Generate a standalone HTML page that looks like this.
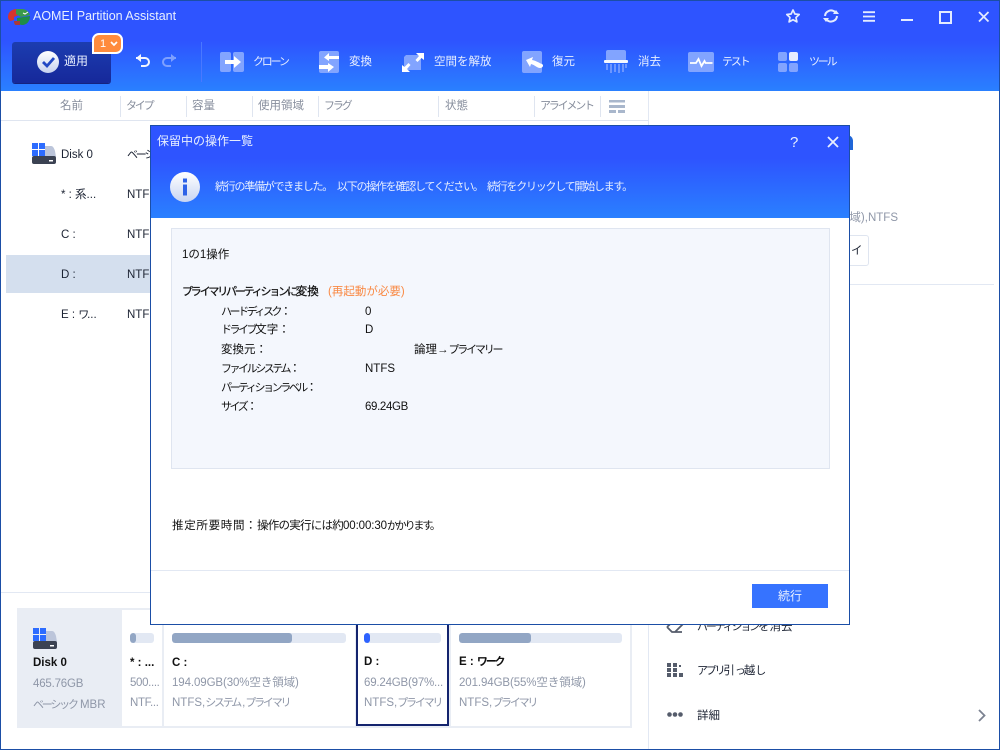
<!DOCTYPE html>
<html lang="ja">
<head>
<meta charset="utf-8">
<title>AOMEI Partition Assistant</title>
<style>
html,body{margin:0;padding:0;background:#fff}
#app{position:relative;width:1000px;height:750px;overflow:hidden;background:#fff;font-family:"Liberation Sans","Noto Sans CJK JP",sans-serif;font-size:11.5px;color:#1c2333}
.t{position:absolute;white-space:nowrap;line-height:16px}
.a{position:absolute}
.w{color:#e8efff}
.g{color:#8f97a8}
.h{color:#868d9c;font-size:11.5px}
.k{font-size:11px;letter-spacing:-2.2px}
.k2{font-size:11px;letter-spacing:-2.45px}
.n{letter-spacing:-.35px}
.sep{position:absolute;top:96px;width:1px;height:21px;background:#dfe5f0}
svg{position:absolute;overflow:visible}
.bar{position:absolute;height:10px;background:#e2e8f3;border-radius:3px;overflow:hidden}
.bar i{position:absolute;left:0;top:0;bottom:0;background:#92a6c4;border-radius:3px}
b{font-weight:700}
</style>
</head>
<body>
<div id="app">
  <!-- Header -->
  <div class="a" style="left:0;top:0;width:1000px;height:91px;background:linear-gradient(#2e54ff 0,#2e54ff 45%,#2a80ff 100%)"></div>
  <svg style="left:8px;top:8px" width="22" height="18" viewBox="0 0 22 18">
    <path d="M0 9C0 4 4 1 9 1l2 0 0 6-5 2 0 3-4 1C1 12 0 11 0 9z" fill="#d8342f"/>
    <path d="M8 1h6c4 0 7 3 8 6l-9 2-5-3z" fill="#3a9a4a"/>
    <path d="M9 10l13-2c0 5-3 9-8 9l-5-1z" fill="#1f8d46"/>
    <path d="M6 13h6v4H8c-1 0-2-1-2-4z" fill="#a93a3a"/>
    <path d="M15 5l2 1 3-2" stroke="#fff" fill="none"/>
  </svg>
  <div class="t w" style="left:33px;top:8px;font-size:12.5px">AOMEI Partition Assistant</div>

  <!-- Window controls -->
  <svg style="left:785px;top:8px" width="16" height="16" viewBox="0 0 16 16"><path d="M8 2l1.900 4 4.300.5-3.200 3 .9 4.400L8 11.700 4.100 13.900 5 9.500 1.800 6.500 6.100 6z" fill="none" stroke="#e3ebff" stroke-width="1.700" stroke-linejoin="round"/></svg>
  <svg style="left:823px;top:8px" width="16" height="16" viewBox="0 0 16 16"><path d="M2 8a6 6 0 0 1 10-4M14 8a6 6 0 0 1-10 4" fill="none" stroke="#e3ebff" stroke-width="2"/><path d="M10 6h6l-3-4zM6 10H0l3 4z" fill="#e3ebff"/></svg>
  <svg style="left:863px;top:11px" width="13" height="11" viewBox="0 0 13 11"><path d="M0 1.200h12M0 5.500h12M0 9.800h12" stroke="#e3ebff" stroke-width="1.800"/></svg>
  <div class="a" style="left:901px;top:19px;width:12px;height:2px;background:#e3ebff"></div>
  <div class="a" style="left:939px;top:11px;width:9px;height:9px;border:2px solid #e3ebff"></div>
  <svg style="left:978px;top:11px" width="12" height="12" viewBox="0 0 12 12"><path d="M1 1l9.500 9.500M10.500 1L1 10.500" stroke="#e3ebff" stroke-width="1.800"/></svg>

  <!-- Apply -->
  <div class="a" style="left:12px;top:42px;width:99px;height:41px;border-radius:3px;background:linear-gradient(#1c3db0,#16289a);box-shadow:0 1px 0 #14237f"></div>
  <svg style="left:37px;top:51px" width="22" height="22" viewBox="0 0 22 22"><defs><linearGradient id="c" x1="0" y1="0" x2="0" y2="1"><stop offset="0" stop-color="#fff"/><stop offset="1" stop-color="#c6d2ef"/></linearGradient></defs><circle cx="11" cy="11" r="11" fill="url(#c)"/><path d="M6 11l4 4 7-8" fill="none" stroke="#2148c4" stroke-width="2.800"/></svg>
  <div class="t w" style="left:64px;top:53px;font-size:12px">適用</div>
  <div class="a" style="left:92px;top:33px;width:27px;height:17px;background:#ff8b3d;border:2px solid #fff;border-radius:7px 7px 7px 0"></div>
  <div class="t" style="left:100px;top:36px;color:#fff;font-size:11px">1</div>
  <svg style="left:110px;top:41px" width="8" height="6" viewBox="0 0 8 6"><path d="M1 1l3 3 3-3" fill="none" stroke="#fff" stroke-width="1.700"/></svg>
  <svg style="left:135px;top:54px" width="16" height="14" viewBox="0 0 16 14"><path d="M1 4h9a4 4 0 0 1 0 8H6" fill="none" stroke="#f2f5ff" stroke-width="2"/><path d="M6 0L1 4l5 4z" fill="#f2f5ff"/></svg>
  <svg style="left:161px;top:54px" width="16" height="14" viewBox="0 0 16 14"><path d="M15 4H6a4 4 0 0 0 0 8h4" fill="none" stroke="#7ea0ff" stroke-width="2"/><path d="M10 0l5 4-5 4z" fill="#7ea0ff"/></svg>
  <div class="a" style="left:201px;top:42px;width:1px;height:40px;background:#4a78ff"></div>

  <!-- Toolbar icons -->
  <svg style="left:220px;top:52px" width="24" height="20" viewBox="0 0 24 20"><rect width="11" height="20" rx="2" fill="#82a4ff"/><rect x="13" width="11" height="20" rx="2" fill="#82a4ff"/><path d="M5 8h9V4l7 6-7 6v-4H5z" fill="#fff"/></svg>
  <div class="t w k" style="left:253px;top:54px">クローン</div>
  <svg style="left:319px;top:51px" width="20" height="22" viewBox="0 0 20 22"><rect width="20" height="22" rx="2" fill="#82a4ff"/><path d="M20 5H10V2L5 6.500 10 10V8h10zM0 14h9v-2l6 4-6 5v-3H0z" fill="#fff"/></svg>
  <div class="t w" style="left:349px;top:54px">変換</div>
  <svg style="left:402px;top:53px" width="22" height="19" viewBox="0 0 22 19"><path d="M4 2h15v15H2V4z" fill="#82a4ff"/><path d="M14 0h8v7l-2.500-2-4 4-2-2 3.500-4zM0 19v-7l2.500 2 4-4 2 2-3.500 4L8 19z" fill="#fff"/></svg>
  <div class="t w" style="left:434px;top:54px">空間を解放</div>
  <svg style="left:522px;top:51px" width="22" height="22" viewBox="0 0 22 22"><rect width="20" height="22" rx="2" fill="#82a4ff"/><path d="M4 9l7-3-1 3c5 1 7 3 10 4 2 1 1 4-2 4-3 0-5-3-9-4l-1 3z" fill="#fff"/></svg>
  <div class="t w" style="left:552px;top:54px">復元</div>
  <svg style="left:604px;top:50px" width="24" height="23" viewBox="0 0 24 23"><rect x="2" width="20" height="11" rx="2" fill="#82a4ff"/><rect y="10" width="24" height="3" rx="1" fill="#f4f7ff"/><path d="M3 14v6M7 14v9M11 14v8M15 14v9M19 14v8M22 14v4" stroke="#82a4ff" stroke-width="1.500"/></svg>
  <div class="t w" style="left:638px;top:54px">消去</div>
  <svg style="left:688px;top:52px" width="26" height="20" viewBox="0 0 26 20"><rect width="26" height="20" rx="2" fill="#82a4ff"/><path d="M2 11h6l2.500-4 3 7 3-5 1 2h7" fill="none" stroke="#fff" stroke-width="1.800"/></svg>
  <div class="t w k" style="left:722px;top:54px">テスト</div>
  <svg style="left:778px;top:52px" width="20" height="20" viewBox="0 0 20 20"><rect width="9" height="9" rx="2" fill="#82a4ff"/><rect x="11" width="9" height="9" rx="2" fill="#e6ecff"/><rect y="11" width="9" height="9" rx="2" fill="#82a4ff"/><rect x="11" y="11" width="9" height="9" rx="2" fill="#82a4ff"/></svg>
  <div class="t w k" style="left:809px;top:54px">ツール</div>

  <!-- Column header -->
  <div class="t h" style="left:60px;top:98px">名前</div>
  <div class="sep" style="left:120px"></div>
  <div class="t h k" style="left:126px;top:98px;font-size:11px">タイプ</div>
  <div class="sep" style="left:186px"></div>
  <div class="t h" style="left:192px;top:98px">容量</div>
  <div class="sep" style="left:252px"></div>
  <div class="t h" style="left:258px;top:98px">使用領域</div>
  <div class="sep" style="left:318px"></div>
  <div class="t h k" style="left:324px;top:98px;font-size:11px">フラグ</div>
  <div class="sep" style="left:438px"></div>
  <div class="t h" style="left:445px;top:98px">状態</div>
  <div class="sep" style="left:534px"></div>
  <div class="t h k" style="left:540px;top:98px;font-size:11px">アライメント</div>
  <div class="sep" style="left:600px"></div>
  <svg style="left:609px;top:100px" width="16" height="13" viewBox="0 0 16 13"><path d="M0 0h16v2.500H0zM0 5h16v3H0zM0 10h7v3H0zM9 10h7v3H9z" fill="#a9b7cc"/></svg>
  <div class="a" style="left:0;top:120px;width:648px;height:1px;background:#dfe5f0"></div>
  <div class="a" style="left:648px;top:91px;width:1px;height:659px;background:#e2e8f3"></div>

  <!-- Disk table rows -->
  <div class="a" style="left:6px;top:255px;width:642px;height:38px;background:#d4dfee"></div>
  <svg style="left:32px;top:143px" width="24" height="21" viewBox="0 0 24 21"><path d="M13 3h6c2 0 3 2 4 5l1 6H13z" fill="#bcc5da"/><rect y="13" width="24" height="8" rx="2" fill="#3b4252"/><rect x="17" y="17" width="4" height="1.500" fill="#fff"/><path d="M0 0h6v6H0zM7 0h6v6H7zM0 7h6v6H0zM7 7h6v6H7z" fill="#2d6cff"/></svg>
  <div class="t" style="left:61px;top:147px">Disk 0</div>
  <div class="t k" style="left:127px;top:147px">ベーシック</div>
  <div class="t" style="left:61px;top:187px">* : 系...</div>
  <div class="t" style="left:127px;top:187px">NTFS</div>
  <div class="t" style="left:61px;top:227px">C :</div>
  <div class="t" style="left:127px;top:227px">NTFS</div>
  <div class="t" style="left:61px;top:267px">D :</div>
  <div class="t" style="left:127px;top:267px">NTFS</div>
  <div class="t" style="left:61px;top:307px">E : <span class="k">ワ</span>...</div>
  <div class="t" style="left:127px;top:307px">NTFS</div>

  <!-- Right panel behind the dialog -->
  <div class="t g" style="left:780px;width:118px;text-align:right;top:210px">領域),NTFS</div>
  <div class="a" style="left:800px;top:235px;width:67px;height:29px;border:1px solid #dfe5f0;border-radius:3px"></div>
  <div class="t" style="left:851px;top:243px">イ</div>
  <div class="a" style="left:660px;top:284px;width:334px;height:1px;background:#e2e8f3"></div>
  <div class="a" style="left:840px;top:135px;width:13px;height:15px;background:#1f66d8;border-radius:6px 6px 0 0"></div>
  <svg style="left:666px;top:618px" width="17" height="15" viewBox="0 0 17 15"><path d="M1 9l5 5h10M1 9l9-8 6 6-7 7" fill="none" stroke="#555c6b" stroke-width="1.800"/></svg>
  <div class="t" style="left:697px;top:619px"><span class="k">パーティション</span>を<span>消去</span></div>
  <svg style="left:667px;top:663px" width="16" height="14" viewBox="0 0 16 14"><path d="M0 0h4v4H0zM6 0h4v4H6zM0 5h4v4H0zM6 5h4v4H6zM0 10h4v4H0zM6 10h4v4H6zM12 10h4v4h-4zM12 2h2v2h-2z" fill="#555c6b"/></svg>
  <div class="t" style="left:697px;top:663px"><span class="k">アプリ</span>引<span class="k">っ</span>越<span class="k">し</span></div>
  <svg style="left:667px;top:712px" width="16" height="5" viewBox="0 0 16 5"><circle cx="2.500" cy="2.500" r="2.300" fill="#555c6b"/><circle cx="8" cy="2.500" r="2.300" fill="#555c6b"/><circle cx="13.500" cy="2.500" r="2.300" fill="#555c6b"/></svg>
  <div class="t" style="left:697px;top:708px">詳細</div>
  <svg style="left:978px;top:709px" width="8" height="13" viewBox="0 0 8 13"><path d="M1 1l5.500 5.500L1 12" fill="none" stroke="#7b8291" stroke-width="1.800"/></svg>

  <!-- Disk map -->
  <div class="a" style="left:0;top:592px;width:648px;height:1px;background:#e2e8f3"></div>
  <div class="a" style="left:17px;top:608px;width:615px;height:120px;background:#e9edf4"></div>
  <div class="a" style="left:122px;top:610px;width:40px;height:116px;background:#fff"></div>
  <div class="a" style="left:164px;top:610px;width:191px;height:116px;background:#fff"></div>
  <div class="a" style="left:356px;top:610px;width:93px;height:116px;background:#fff;border:2px solid #14246e;box-sizing:border-box"></div>
  <div class="a" style="left:451px;top:610px;width:179px;height:116px;background:#fff"></div>

  <svg style="left:33px;top:628px" width="24" height="21" viewBox="0 0 24 21"><path d="M13 3h6c2 0 3 2 4 5l1 6H13z" fill="#bcc5da"/><rect y="13" width="24" height="8" rx="2" fill="#3b4252"/><rect x="17" y="17" width="4" height="1.500" fill="#fff"/><path d="M0 0h6v6H0zM7 0h6v6H7zM0 7h6v6H0zM7 7h6v6H7z" fill="#2d6cff"/></svg>
  <div class="t" style="left:33px;top:655px;color:#111"><b>Disk 0</b></div>
  <div class="t g n" style="left:33px;top:676px;letter-spacing:-.2px">465.76GB</div>
  <div class="t g" style="left:33px;top:697px"><span class="k">ベーシック</span>&nbsp;MBR</div>

  <div class="bar" style="left:130px;top:633px;width:24px"><i style="width:6px"></i></div>
  <div class="t" style="left:130px;top:655px;color:#111"><b>* : ...</b></div>
  <div class="t g n" style="left:130px;top:675px">500....</div>
  <div class="t g n" style="left:130px;top:695px">NTF...</div>

  <div class="bar" style="left:172px;top:633px;width:174px"><i style="width:120px"></i></div>
  <div class="t" style="left:172px;top:655px;color:#111"><b>C :</b></div>
  <div class="t g" style="left:172px;top:675px;letter-spacing:-.1px">194.09GB(30%空き領域)</div>
  <div class="t g" style="left:172px;top:695px">NTFS,<span class="k">システム</span><span style="margin-left:2px">,</span><span class="k">プライマリ</span></div>

  <div class="bar" style="left:364px;top:633px;width:77px"><i style="width:6px;background:#2d62ff"></i></div>
  <div class="t" style="left:364px;top:654px;color:#111"><b>D :</b></div>
  <div class="t g" style="left:364px;top:675px;letter-spacing:-.2px">69.24GB(97%...</div>
  <div class="t g" style="left:364px;top:695px">NTFS,<span class="k">プライマリ</span></div>

  <div class="bar" style="left:459px;top:633px;width:163px"><i style="width:72px"></i></div>
  <div class="t" style="left:459px;top:654px;color:#111"><b>E : <span class="k">ワーク</span></b></div>
  <div class="t g" style="left:459px;top:675px;letter-spacing:-.1px">201.94GB(55%空き領域)</div>
  <div class="t g" style="left:459px;top:695px">NTFS,<span class="k">プライマリ</span></div>

  <!-- Dialog -->
  <div class="a" style="left:150px;top:125px;width:698px;height:498px;background:#fff;border:1px solid #1b4ea6"></div>
  <div class="a" style="left:151px;top:126px;width:698px;height:92px;background:linear-gradient(#2e54ff 0,#2e54ff 35%,#2a80ff 100%)"></div>
  <div class="t w" style="left:157px;top:133px;font-size:12px">保留中の操作一覧</div>
  <div class="t" style="left:790px;top:135px;color:#e8efff;font-size:15px">?</div>
  <svg style="left:828px;top:137px" width="10" height="10" viewBox="0 0 10 10"><path d="M0 0l10 10M10 0L0 10" stroke="#e8efff" stroke-width="1.800"/></svg>
  <svg style="left:170px;top:172px" width="30" height="30" viewBox="0 0 30 30"><defs><linearGradient id="i" x1="0" y1="0" x2="0" y2="1"><stop offset="0" stop-color="#fff"/><stop offset="1" stop-color="#c8d5f2"/></linearGradient></defs><circle cx="15" cy="15" r="15" fill="url(#i)"/><rect x="13" y="6.500" width="4" height="4" fill="#2d62e8"/><rect x="13" y="12.500" width="4" height="11" fill="#2d62e8"/></svg>
  <div class="t w" style="left:215px;top:179px;font-size:11px;letter-spacing:-1.25px">続行の準備ができました。</div>
  <div class="t w" style="left:337px;top:179px;font-size:11px;letter-spacing:-1.25px">以下の操作を確認してください。</div>
  <div class="t w" style="left:487px;top:179px;font-size:11px;letter-spacing:-1.25px">続行をクリックして開始します。</div>

  <div class="a" style="left:171px;top:228px;width:657px;height:239px;background:#f4f7fd;border:1px solid #dfe5f0"></div>
  <div class="t" style="left:182px;top:247px;color:#111">1の1操作</div>
  <div class="t" style="left:182px;top:284px;color:#111;-webkit-text-stroke:.25px #111"><span class="k">プライマリパーティションに</span>変換</div>
  <div class="t" style="left:328px;top:284px;color:#f98a45">(再起動が必要)</div>
  <div class="t" style="left:221px;top:304px;color:#111"><span class="k2">ハードディスク</span>：</div>
  <div class="t" style="left:365px;top:304px;color:#111">0</div>
  <div class="t" style="left:221px;top:322px;color:#111"><span class="k2">ドライブ</span>文字：</div>
  <div class="t" style="left:365px;top:322px;color:#111">D</div>
  <div class="t" style="left:221px;top:342px;color:#111">変換元：</div>
  <div class="t" style="left:414px;top:342px;color:#111">論理→<span class="k">プライマリー</span></div>
  <div class="t" style="left:221px;top:361px;color:#111"><span class="k2">ファイルシステム</span>：</div>
  <div class="t" style="left:365px;top:361px;color:#111">NTFS</div>
  <div class="t" style="left:221px;top:380px;color:#111"><span class="k2">パーティションラベル</span>：</div>
  <div class="t" style="left:221px;top:399px;color:#111"><span class="k2">サイズ</span>：</div>
  <div class="t n" style="left:365px;top:399px;color:#111">69.24GB</div>

  <div class="t" style="left:172px;top:518px;color:#111;letter-spacing:.7px">推定所要時間</div>
  <div class="t" style="left:245px;top:518px;color:#111">：</div>
  <div class="t" style="left:257px;top:518px;color:#111;letter-spacing:-.75px">操作の実行には約</div>
  <div class="t" style="left:343px;top:518px;color:#111;letter-spacing:-.1px">00:00:30</div>
  <div class="t k" style="left:387px;top:518px;color:#111">かかります。</div>

  <div class="a" style="left:151px;top:570px;width:698px;height:1px;background:#e2e8f3"></div>
  <div class="a" style="left:752px;top:584px;width:76px;height:24px;background:#3673ff"></div>
  <div class="t w" style="left:752px;top:588px;width:76px;text-align:center;font-size:12px">続行</div>

  <!-- Window border -->
  <div class="a" style="left:0;top:0;width:998px;height:748px;border:1px solid #1b4ea6"></div>
</div>
</body>
</html>
